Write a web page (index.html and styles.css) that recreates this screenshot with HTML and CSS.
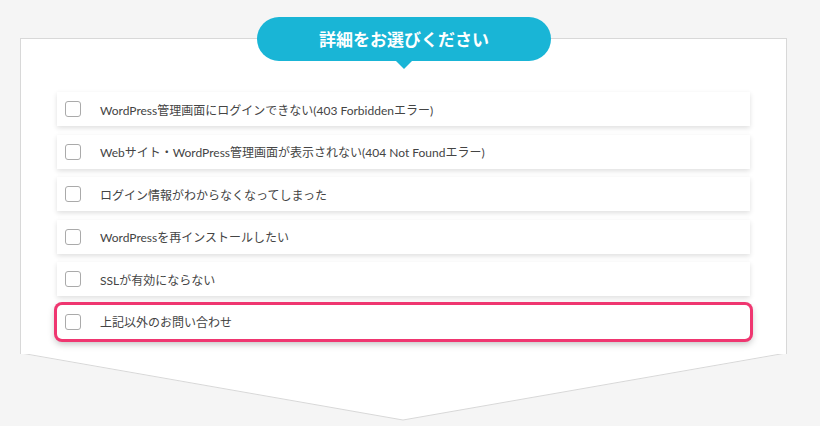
FILE: index.html
```html
<!DOCTYPE html>
<html lang="ja">
<head>
    <meta charset="UTF-8">
    <title>詳細をお選びください</title>
    <link rel="stylesheet" href="styles.css">
</head>
<body>
    <div class="wrap">
        <div class="panel">
            <!-- Title bubble -->
            <div class="bubble">詳細をお選びください</div>

            <ul class="options">
                <li class="option"><span class="check"></span>WordPress管理画面にログインできない(403 Forbiddenエラー)</li>
                <li class="option"><span class="check"></span>Webサイト・WordPress管理画面が表示されない(404 Not Foundエラー)</li>
                <li class="option"><span class="check"></span>ログイン情報がわからなくなってしまった</li>
                <li class="option"><span class="check"></span>WordPressを再インストールしたい</li>
                <li class="option"><span class="check"></span>SSLが有効にならない</li>
                <li class="option active"><span class="check"></span>上記以外のお問い合わせ</li>
            </ul>
        </div>
        <!-- Arrow-shaped bottom of the panel -->
        <svg class="panel-bottom" width="767" height="69" viewBox="0 0 767 69">
            <polygon points="0,0 767,0 767,0.5 383,67 0,0.5" fill="#fff"/>
            <polyline points="0.5,0 383,67 766.5,0" fill="none" stroke="#d8d8d8" stroke-width="1"/>
        </svg>
    </div>
</body>
</html>
```

FILE: styles.css
```css
body {
    margin: 0;
    background-color: #f5f5f5;
    font-family: 'Lato', 'Noto Sans CJK JP', sans-serif;
    color: #444;
}

.wrap {
    padding: 38px 0 0 20px;
    width: 767px;
}

.panel {
    position: relative;
    background: white;
    border: 1px solid #d8d8d8;
    border-bottom: none;
    padding: 53px 36px 15px 36px;
}

/* Title bubble */
.bubble {
    position: absolute;
    top: -22px;
    left: 236px;
    width: 294px;
    height: 44px;
    line-height: 44px;
    border-radius: 22px;
    background-color: #19b5d6;
    color: white;
    font-family: 'Noto Sans CJK JP', sans-serif;
    font-weight: bold;
    font-size: 17px;
    text-align: center;
}

.bubble::after {
    content: '';
    position: absolute;
    left: 139px;
    bottom: -8px;
    border-left: 8px solid transparent;
    border-right: 8px solid transparent;
    border-top: 8px solid #19b5d6;
}

.options {
    list-style: none;
    margin: 0;
    padding: 0;
    display: flex;
    flex-direction: column;
    gap: 8.6px;
}

.option {
    display: flex;
    align-items: center;
    height: 34px;
    padding-left: 8px;
    background: white;
    box-shadow: 0 2px 5px rgba(0, 0, 0, 0.13);
    font-size: 12px;
    white-space: nowrap;
}

.check {
    width: 14px;
    height: 14px;
    border: 1px solid #aaa;
    border-radius: 3px;
    margin-right: 19px;
    flex-shrink: 0;
}

.option.active {
    border-radius: 5px;
    box-shadow: 0 0 0 3px #ef3670, 0 3px 7px 2px rgba(0, 0, 0, 0.25);
}

.panel-bottom {
    display: block;
    margin-top: -0.5px;
}
```
